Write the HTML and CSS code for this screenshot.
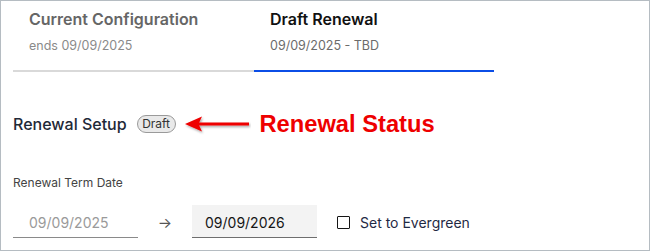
FILE: index.html
```html
<!DOCTYPE html>
<html>
<head>
<meta charset="utf-8">
<link rel="stylesheet" href="styles.css">
</head>
<body>
<div class="panel">
  <div class="tabs">
    <div class="tab">
      <div class="tab-title">Current Configuration</div>
      <div class="tab-sub">ends 09/09/2025</div>
    </div>
    <div class="tab active">
      <div class="tab-title">Draft Renewal</div>
      <div class="tab-sub">09/09/2025 - TBD</div>
    </div>
  </div>
  <div class="setup-head">
    <h2 class="setup-title">Renewal Setup</h2>
    <span class="badge">Draft</span>
    <svg class="callout-arrow" width="68" height="22" viewBox="0 0 68 22">
      <defs>
        <filter id="sh" x="-20%" y="-50%" width="140%" height="200%">
          <feDropShadow dx="1" dy="1.5" stdDeviation="1" flood-color="#000" flood-opacity="0.35"/>
        </filter>
      </defs>
      <g filter="url(#sh)" fill="#ee0000" stroke="none">
        <rect x="14" y="9.5" width="52" height="3"/>
        <path d="M2 11 L19 3.5 L15.5 11 L19 18.5 Z"/>
      </g>
    </svg>
    <span class="callout-text">Renewal Status</span>
  </div>
  <div class="field">
    <div class="field-label">Renewal Term Date</div>
    <div class="field-row">
      <div class="date-input disabled">09/09/2025</div>
      <span class="to-arrow">→</span>
      <div class="date-input filled">09/09/2026</div>
      <label class="check">
        <span class="box"></span>
        <span class="check-text">Set to Evergreen</span>
      </label>
    </div>
  </div>
</div>
</body>
</html>
```
FILE: styles.css
```css
* { box-sizing: border-box; }
html, body { margin: 0; padding: 0; background: #fff; }
body { font-family: Inter, "Noto Sans", sans-serif; }

.panel {
  width: 650px;
  height: 251px;
  border: 1px solid #b5bcc2;
  padding: 0 12px;
  overflow: hidden;
}

.tabs {
  display: flex;
  width: 481px;
}
.tab {
  flex: 0 0 241px;
  padding: 8px 16px 0;
  height: 71px;
  border-bottom: 2px solid #d9d9d9;
}
.tab.active {
  flex-basis: 240px;
  border-bottom-color: #0b4de6;
}
.tab-title {
  font-size: 16px;
  line-height: 20px;
  font-weight: 600;
  color: #666;
}
.tab.active .tab-title { color: #111; }
.tab-sub {
  margin-top: 9px;
  font-size: 12.5px;
  line-height: 16px;
  color: #8a8a8a;
}
.tab.active .tab-sub { color: #6b6b6b; }

.setup-head {
  display: flex;
  align-items: center;
  margin-top: 42px;
  height: 20px;
}
.setup-title {
  margin: 0;
  font-size: 16px;
  line-height: 20px;
  font-weight: 500;
  color: #1f2937;
}
.badge {
  margin-left: 10px;
  height: 18px;
  padding: 0 4.5px;
  border: 1px solid #9a9a9a;
  border-radius: 9px;
  background: #e9e9e9;
  font-size: 12px;
  line-height: 16px;
  color: #333;
}
.callout-arrow {
  margin-left: 7px;
  display: block;
}
.callout-text {
  margin-left: 9px;
  font-family: "Liberation Sans", Arial, sans-serif;
  font-weight: 700;
  font-size: 23.7px;
  line-height: 20px;
  color: #ee0000;
}

.field { margin-top: 41px; }
.field-label {
  font-size: 12px;
  line-height: 16px;
  color: #444;
}
.field-row {
  display: flex;
  align-items: center;
  margin-top: 14px;
}
.date-input {
  width: 125px;
  height: 33px;
  padding: 9px 16px 0;
  font-size: 14px;
  line-height: 18px;
  border-bottom: 1px solid #8a8a8a;
}
.date-input.disabled { color: #9a9a9a; }
.date-input.filled {
  background: #f3f3f3;
  color: #161616;
  padding-left: 13px;
  border-bottom-color: #6e6e6e;
}
.to-arrow {
  width: 54px;
  text-align: center;
  font-size: 15px;
  color: #555;
  padding-top: 2px;
}
.check {
  display: flex;
  align-items: center;
  margin-left: 20px;
  padding-top: 2px;
}
.box {
  width: 13px;
  height: 13px;
  border: 1.5px solid #161616;
  border-radius: 1px;
}
.check-text {
  margin-left: 10px;
  font-size: 14px;
  line-height: 18px;
  color: #1f2a44;
}
```
